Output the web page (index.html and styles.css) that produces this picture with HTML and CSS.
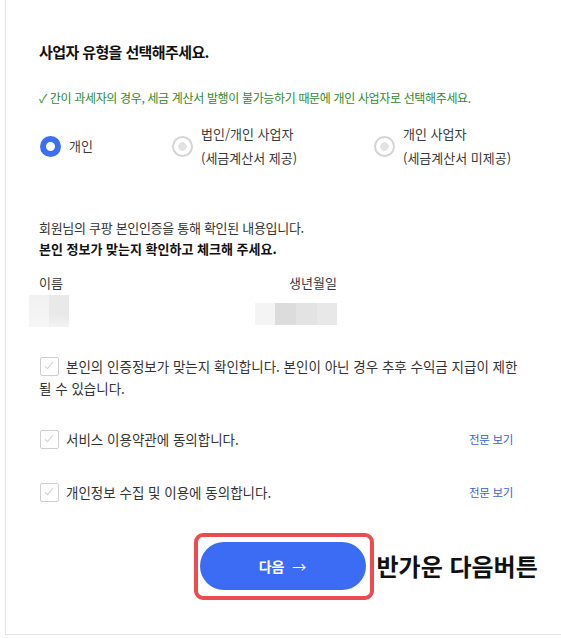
FILE: index.html
```html
<!DOCTYPE html>
<html lang="ko">
<head>
  <meta charset="UTF-8">
  <link rel="stylesheet" href="styles.css">
</head>
<body>
  <div class="panel">
    <h2 class="title">사업자 유형을 선택해주세요.</h2>
    <p class="note">✓ 간이 과세자의 경우, 세금 계산서 발행이 불가능하기 때문에 개인 사업자로 선택해주세요.</p>

    <div class="type-row">
      <label class="type-option">
        <span class="radio checked"></span>
        <span class="type-text">개인</span>
      </label>
      <label class="type-option">
        <span class="radio"></span>
        <span class="type-text">법인/개인 사업자<br>(세금계산서 제공)</span>
      </label>
      <label class="type-option">
        <span class="radio"></span>
        <span class="type-text">개인 사업자<br>(세금계산서 미제공)</span>
      </label>
    </div>

    <p class="intro">회원님의 쿠팡 본인인증을 통해 확인된 내용입니다.<br><strong>본인 정보가 맞는지 확인하고 체크해 주세요.</strong></p>

    <div class="info-grid">
      <div class="info-item">
        <div class="info-label">이름</div>
        <div class="blur blur-name">
          <span class="t1"></span><span class="t2"></span>
        </div>
      </div>
      <div class="info-item">
        <div class="info-label">생년월일</div>
        <div class="blur blur-birth">
          <span class="t1"></span><span class="t3"></span><span class="t2"></span><span class="t4"></span>
        </div>
      </div>
    </div>

    <p class="agree agree-long"><span class="check"></span>본인의 인증정보가 맞는지 확인합니다. 본인이 아닌 경우 추후 수익금 지급이 제한될 수 있습니다.</p>

    <div class="agree-row">
      <span class="agree"><span class="check"></span>서비스 이용약관에 동의합니다.</span>
      <a class="view-link">전문 보기</a>
    </div>

    <div class="agree-row">
      <span class="agree"><span class="check"></span>개인정보 수집 및 이용에 동의합니다.</span>
      <a class="view-link">전문 보기</a>
    </div>

    <div class="next-area">
      <div class="highlight">
        <button type="button" class="next-button">다음 <span class="arrow">→</span></button>
        <span class="annotation">반가운 다음버튼</span>
      </div>
    </div>
  </div>
</body>
</html>
```

FILE: styles.css
```css
html {
    box-sizing: border-box;
    font-family: "Noto Sans CJK KR", "Noto Sans", sans-serif;
    font-size: 13px;
    color: #333;
}

*, ::before, ::after {
    box-sizing: inherit;
}

body {
    margin: 0;
    background: #fff;
}

p, h2 {
    margin: 0;
}

/* PANEL */

.panel {
    margin-left: 5px;
    border-left: 1px solid #e6e6e6;
    border-bottom: 1px solid #e6e6e6;
    padding: 41px 0 32px 33px;
    height: 635px;
}

.title {
    font-size: 15px;
    line-height: 22px;
    font-weight: bold;
    color: #111;
    letter-spacing: -0.6px;
}

.note {
    margin-top: 27px;
    font-size: 12px;
    line-height: 16px;
    color: #2d8a2d;
    letter-spacing: -0.35px;
}

/* BUSINESS TYPE */

.type-row {
    display: grid;
    grid-template-columns: 132px 202px 1fr;
    align-items: center;
    margin-top: 16px;
    padding-left: 1px;
}

.type-option {
    display: flex;
    align-items: center;
    gap: 8px;
    line-height: 24px;
    color: #3a3a3a;
}

.radio {
    width: 21px;
    height: 21px;
    border-radius: 50%;
    border: 2px solid #d4d4d4;
    background: radial-gradient(circle, #e2e2e2 0 4px, #fff 4.5px);
    flex: none;
}

.radio.checked {
    border: 6px solid #3b6ef0;
    background: #fff;
}

/* INFO */

.intro {
    margin-top: 47px;
    line-height: 21px;
    color: #333;
    letter-spacing: -0.3px;
}

.intro strong {
    color: #111;
    letter-spacing: 0;
}

.info-grid {
    display: grid;
    grid-template-columns: 250px 1fr;
    margin-top: 14px;
}

.info-label {
    line-height: 20px;
    color: #3a3a3a;
}

.blur {
    display: flex;
}

.blur span {
    display: block;
}

.blur-name {
    margin: 2px 0 0 -10px;
    height: 32px;
}

.blur-name .t1 {
    width: 20px;
    background: linear-gradient(#f1f1f1, #f6f6f6);
}

.blur-name .t2 {
    width: 20px;
    background: linear-gradient(#e9e9e9 60%, #f3f3f3);
}

.blur-birth {
    margin: 10px 0 0 -34px;
    height: 22px;
}

.blur-birth .t1 {
    width: 20px;
    background: #f4f4f4;
}

.blur-birth .t3 {
    width: 21px;
    background: #dcdcdc;
}

.blur-birth .t2 {
    width: 21px;
    background: #e3e3e3;
}

.blur-birth .t4 {
    width: 20px;
    background: #e8e8e8;
}

/* AGREEMENTS */

.agree {
    font-size: 13.5px;
    line-height: 22px;
    color: #333;
}

.agree-long {
    margin-top: 28px;
    width: 480px;
}

.check {
    display: inline-block;
    width: 19px;
    height: 19px;
    margin: 0 7px 0 1px;
    vertical-align: -4px;
    border: 1.5px solid #cfcfcf;
    border-radius: 2px;
    background: #fff;
    position: relative;
}

.check::after {
    content: "";
    position: absolute;
    left: 5.5px;
    top: 2px;
    width: 4px;
    height: 9px;
    border-right: 1.5px solid #d2d2d2;
    border-bottom: 1.5px solid #d2d2d2;
    transform: rotate(40deg);
}

.agree-row {
    display: flex;
    justify-content: space-between;
    align-items: center;
    width: 474px;
    margin-top: 29px;
}

.agree-row + .agree-row {
    margin-top: 31px;
}

.view-link {
    font-size: 11.5px;
    color: #3a5fd9;
    letter-spacing: -0.3px;
}

/* NEXT BUTTON */

.next-area {
    display: flex;
    justify-content: center;
    margin: 30px 0 0 -33px;
}

.highlight {
    position: relative;
    border: 4px solid #ec4b4f;
    border-radius: 9px;
    padding: 5px 4px 6px 2px;
}

.next-button {
    display: block;
    width: 166px;
    height: 48px;
    border: none;
    border-radius: 24px;
    background: #3b6cf3;
    color: #fff;
    font-family: inherit;
    font-size: 14px;
    font-weight: bold;
}

.arrow {
    font-weight: normal;
    margin-left: 4px;
}

.annotation {
    position: absolute;
    left: calc(100% + 7px);
    top: 50%;
    transform: translateY(-54%);
    white-space: nowrap;
    font-size: 24px;
    font-weight: bold;
    color: #111;
}
```
